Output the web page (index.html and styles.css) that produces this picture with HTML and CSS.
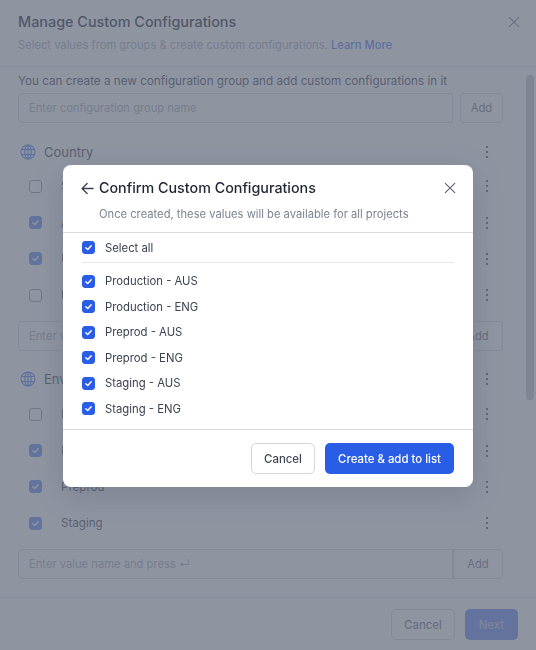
FILE: index.html
```html
<!DOCTYPE html>
<html lang="en">
<head>
<meta charset="utf-8">
<title>Manage Custom Configurations</title>
<link rel="stylesheet" href="styles.css">
</head>
<body>
<svg class="defs" width="0" height="0" aria-hidden="true">
  <symbol id="globe" viewBox="0 0 16 16"><g fill="none" stroke="currentColor" stroke-width="1.1"><circle cx="8" cy="8" r="7"/><ellipse cx="8" cy="8" rx="3.2" ry="7"/><path d="M1.6 5.5h12.8M1.6 10.5h12.8M8 1v14"/></g></symbol>
  <symbol id="dots" viewBox="0 0 4 14"><g fill="currentColor"><circle cx="2" cy="2" r="1.1"/><circle cx="2" cy="7" r="1.1"/><circle cx="2" cy="12" r="1.1"/></g></symbol>
  <symbol id="tick" viewBox="0 0 14 14"><path d="M3.6 7.3l2.4 2.3 4.4-4.7" fill="none" stroke="#fff" stroke-width="1.8" stroke-linecap="round" stroke-linejoin="round"/></symbol>
  <symbol id="close" viewBox="0 0 14 14"><path d="M1.5 1.5l11 11M12.5 1.5l-11 11" fill="none" stroke="currentColor" stroke-width="1.3" stroke-linecap="round"/></symbol>
</svg>
<div class="screen">
  <main class="base">
    <header class="base-head">
      <div class="base-title-row">
        <h1 class="base-title">Manage Custom Configurations</h1>
        <svg class="base-close"><use href="#close"/></svg>
      </div>
      <p class="base-sub">Select values from groups &amp; create custom configurations. <a class="learn">Learn More</a></p>
    </header>
    <div class="base-body">
      <div class="scrollbar"></div>
      <p class="hint">You can create a new configuration group and add custom configurations in it</p>
      <div class="entry first-entry"><div class="entry-input">Enter configuration group name</div><div class="entry-gap"></div><div class="entry-add sep">Add</div></div>
      <div class="group-head"><svg class="globe"><use href="#globe"/></svg><span class="group-name">Country</span><svg class="dots"><use href="#dots"/></svg></div>
      <div class="row"><span class="box"></span><span class="row-label">Spain</span><svg class="dots"><use href="#dots"/></svg></div>
      <div class="row"><span class="box on"><svg><use href="#tick"/></svg></span><span class="row-label">Australia</span><svg class="dots"><use href="#dots"/></svg></div>
      <div class="row"><span class="box on"><svg><use href="#tick"/></svg></span><span class="row-label">United Kingdom</span><svg class="dots"><use href="#dots"/></svg></div>
      <div class="row"><span class="box"></span><span class="row-label">India</span><svg class="dots"><use href="#dots"/></svg></div>
      <div class="entry group-entry"><div class="entry-input">Enter value name and press ↵</div><div class="entry-add">Add</div></div>
      <div class="group-head second"><svg class="globe"><use href="#globe"/></svg><span class="group-name">Environment</span><svg class="dots"><use href="#dots"/></svg></div>
      <div class="row"><span class="box"></span><span class="row-label">Development</span><svg class="dots"><use href="#dots"/></svg></div>
      <div class="row"><span class="box on"><svg><use href="#tick"/></svg></span><span class="row-label">Production</span><svg class="dots"><use href="#dots"/></svg></div>
      <div class="row"><span class="box on"><svg><use href="#tick"/></svg></span><span class="row-label">Preprod</span><svg class="dots"><use href="#dots"/></svg></div>
      <div class="row"><span class="box on"><svg><use href="#tick"/></svg></span><span class="row-label">Staging</span><svg class="dots"><use href="#dots"/></svg></div>
      <div class="entry group-entry"><div class="entry-input">Enter value name and press ↵</div><div class="entry-add">Add</div></div>
    </div>
    <footer class="base-foot">
      <div class="btn ghost">Cancel</div>
      <div class="btn primary">Next</div>
    </footer>
  </main>
  <div class="overlay">
    <section class="dialog">
      <header class="dlg-head">
        <div class="dlg-title-row">
          <svg class="back" viewBox="0 0 14 14"><path d="M13 7H1.4M6.6 1.6L1.2 7l5.4 5.4" fill="none" stroke="currentColor" stroke-width="1.4" stroke-linecap="round" stroke-linejoin="round"/></svg>
          <h2 class="dlg-title">Confirm Custom Configurations</h2>
          <svg class="dlg-close"><use href="#close"/></svg>
        </div>
        <p class="dlg-sub">Once created, these values will be available for all projects</p>
      </header>
      <div class="dlg-body">
        <label class="opt all"><span class="box on"><svg><use href="#tick"/></svg></span>Select all</label>
        <div class="opts">
          <label class="opt"><span class="box on"><svg><use href="#tick"/></svg></span>Production - AUS</label>
          <label class="opt"><span class="box on"><svg><use href="#tick"/></svg></span>Production - ENG</label>
          <label class="opt"><span class="box on"><svg><use href="#tick"/></svg></span>Preprod - AUS</label>
          <label class="opt"><span class="box on"><svg><use href="#tick"/></svg></span>Preprod - ENG</label>
          <label class="opt"><span class="box on"><svg><use href="#tick"/></svg></span>Staging - AUS</label>
          <label class="opt"><span class="box on"><svg><use href="#tick"/></svg></span>Staging - ENG</label>
        </div>
      </div>
      <footer class="dlg-foot">
        <div class="btn ghost">Cancel</div>
        <div class="btn primary">Create &amp; add to list</div>
      </footer>
    </section>
  </div>
</div>
</body>
</html>
```
FILE: styles.css
```css
* { box-sizing: border-box; }
html, body { margin: 0; padding: 0; }
body { font-family: Inter, "Liberation Sans", sans-serif; color: #3b4250; background: #fff; }
.defs { position: absolute; }
p, h1, h2 { margin: 0; }

.screen { position: relative; width: 536px; height: 650px; overflow: hidden; }

/* underlying modal */
.base { height: 650px; display: flex; flex-direction: column; background: #fff; }
.base-head { height: 67px; padding: 13px 18px 0; border-bottom: 1px solid #e2e5ea; flex: none; }
.base-title-row { display: flex; align-items: center; justify-content: space-between; height: 18px; }
.base-title { font-size: 14.4px; line-height: 18px; font-weight: 500; color: #2c3340; }
.base-close { width: 12px; height: 12px; margin-right: -2px; color: #7b8290; }
.base-sub { margin-top: 6px; font-size: 11.2px; line-height: 16px; color: #aab0bb; }
.learn { color: #5a83f0; font-weight: 500; }

.base-body { position: relative; flex: 1; padding: 6px 33px 0 18px; overflow: hidden; }
.scrollbar { position: absolute; right: 2px; top: 8px; width: 8px; height: 325px; border-radius: 4px; background: #c9cdd6; }
.hint { font-size: 11.7px; line-height: 16px; color: #4a515e; }

.entry { display: flex; height: 30px; }
.first-entry { margin-top: 4px; }
.group-entry { margin-top: 7.4px; }
.entry-input { flex: 1; padding-left: 10px; display: flex; align-items: center; font-size: 11.2px; color: #aab0bb; border: 1px solid #d9dce2; border-radius: 4px 0 0 4px; }
.entry-add { width: 50px; display: flex; align-items: center; justify-content: center; font-size: 11.2px; color: #7b8290; border: 1px solid #d9dce2; border-radius: 0 4px 4px 0; }
.entry-gap { width: 7px; }
.entry-add.sep { width: 43px; border-radius: 4px; }

.group-head { display: flex; align-items: center; height: 18px; margin-top: 20px; margin-bottom: 7px; }
.group-head.second { margin-top: 19px; margin-bottom: 8px; }
.globe { width: 16px; height: 16px; margin-left: 2px; color: #5a83f0; flex: none; }
.group-name { margin-left: 8px; flex: 1; font-size: 13px; color: #4a515e; }
.dots { width: 4px; height: 14px; margin-right: 14px; color: #3f4653; flex: none; }

.row { display: flex; align-items: center; height: 36.4px; padding-left: 11px; }
.row-label { margin-left: 19px; flex: 1; font-size: 11.6px; color: #4a515e; }

.box { width: 13px; height: 13px; border: 1px solid #b7bcc6; border-radius: 3px; flex: none; display: block; }
.box svg { display: block; width: 100%; height: 100%; }
.box.on { background: #2a5de6; border-color: #2a5de6; }
.base .box { border-color: #9aa0ac; }
.base .box.on { background: #6f8ff5; border-color: #6f8ff5; }

.base-foot { flex: none; height: 53px; display: flex; justify-content: flex-end; gap: 10px; padding: 11px 18px 0; border-top: 1px solid #e2e5ea; }

.btn { height: 31px; display: flex; align-items: center; justify-content: center; border-radius: 5px; font-size: 11.4px; font-weight: 500; }
.btn.ghost { width: 64px; border: 1px solid #d5d8de; background: #fff; color: #3f4653; }
.btn.primary { background: #2a5de6; color: #fff; min-width: 53px; }
.base .btn.ghost { color: #7b8290; background: transparent; }
.base .btn.primary { background: #6f8ff5; color: #c3cde6; }

/* overlay + dialog */
.overlay { position: absolute; inset: 0; display: flex; justify-content: center; align-items: flex-start; padding-top: 165px; background: rgba(95, 103, 121, 0.7); backdrop-filter: blur(0.45px); }
.dialog { width: 410px; height: 322px; background: #fff; border-radius: 8px; box-shadow: 0 8px 30px rgba(60, 68, 85, 0.22); display: flex; flex-direction: column; }
.dlg-head { height: 68px; padding: 14px 16px 0 18px; border-bottom: 1px solid #d6d9de; flex: none; }
.dlg-title-row { display: flex; align-items: center; height: 18px; }
.back { width: 13px; height: 13px; color: #3a4150; flex: none; }
.dlg-title { margin-left: 5px; flex: 1; font-size: 14.3px; line-height: 18px; font-weight: 500; color: #1f2633; }
.dlg-close { width: 12px; height: 12px; margin-right: 1px; color: #5d6470; flex: none; }
.dlg-sub { margin: 9px 0 0 18px; font-size: 11.2px; line-height: 16px; color: #7c8491; }

.dlg-body { height: 196px; padding: 0 19px; flex: none; }
.opt { display: flex; align-items: center; gap: 10px; height: 25.5px; font-size: 11.3px; color: #3b4250; }
.opt.all { height: 30px; border-bottom: 1px solid #e6e8ec; }
.opts { margin-top: 5.4px; }

.dlg-foot { height: 58px; display: flex; justify-content: flex-end; gap: 10px; padding: 13px 19px 0; border-top: 1px solid #d6d9de; flex: none; }
.dlg-foot .btn { padding-top: 1px; }
.dlg-foot .btn.primary { width: 129px; }
```
